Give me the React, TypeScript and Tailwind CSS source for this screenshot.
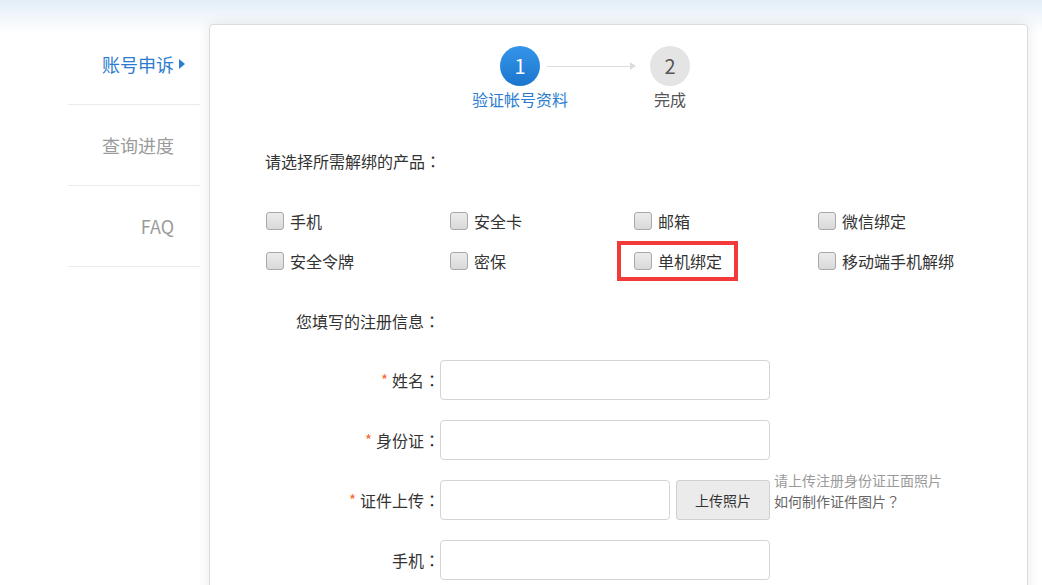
import React from "react";

const font = { fontFamily: '"Noto Sans CJK SC", "Noto Sans", sans-serif' };

function P({ c }: { c: string }) {
  return <span className="font-['Noto_Sans_CJK_TC',sans-serif]">{c}</span>;
}

function Checkbox({ label, highlight }: { label: string; highlight?: boolean }) {
  return (
    <div className="relative flex h-[20px] items-center">
      {highlight && (
        <div className="pointer-events-none absolute left-[-17px] top-[-10px] h-[40px] w-[121px] border-4 border-[#f23a3a]" />
      )}
      <span className="h-[18px] w-[18px] shrink-0 rounded-[3px] border border-[#a9a9a9] bg-gradient-to-b from-[#ececec] to-[#d9d9d9]" />
      <span className="ml-[6px] whitespace-nowrap text-[16px] leading-[20px] text-[#333]">{label}</span>
    </div>
  );
}

function Label({ text, required }: { text: string; required?: boolean }) {
  return (
    <div className="flex w-[230px] shrink-0 items-center justify-end whitespace-nowrap text-[16px] leading-[20px] text-[#333]">
      {required && <span className="mr-[4px] text-[15px] text-[#f5692c]">*</span>}
      <span>
        {text}
        <P c="：" />
      </span>
    </div>
  );
}

export default function App() {
  const products = ["手机", "安全卡", "邮箱", "微信绑定", "安全令牌", "密保", "单机绑定", "移动端手机解绑"];
  return (
    <div
      className="flex min-h-[585px] bg-[linear-gradient(to_bottom,#e3eef8_0px,#f6f9fc_22px,#ffffff_34px)] pl-[68px] pt-[24px] [text-spacing-trim:space-all]"
      style={font}
    >
      <div className="w-[132px] shrink-0">
        <div className="flex h-[81px] items-center justify-end border-b border-[#ebebeb] pr-[26px]">
          <span className="relative text-[18px] leading-[24px] text-[#2b7cd0]">
            账号申诉
            <span className="absolute left-[calc(100%+5px)] top-1/2 -translate-y-1/2 border-y-[5px] border-l-[6px] border-y-transparent border-l-[#2b7cd0]" />
          </span>
        </div>
        <div className="flex h-[81px] items-center justify-end border-b border-[#ebebeb] pr-[26px]">
          <span className="text-[18px] leading-[24px] text-[#9b9b9b]">查询进度</span>
        </div>
        <div className="flex h-[81px] items-center justify-end border-b border-[#ebebeb] pr-[26px]">
          <span className="text-[18px] leading-[24px] text-[#9b9b9b]">FAQ</span>
        </div>
      </div>

      <div className="ml-[9px] h-[620px] w-[819px] shrink-0 rounded-[4px] border border-[#dcdcdc] bg-white pt-[21px] shadow-[0_0_14px_rgba(0,0,0,0.09)]">
        {/* steps */}
        <div className="flex items-start pl-[290px]">
          <div className="flex w-[40px] flex-col items-center">
            <div className="flex h-[40px] w-[40px] items-center justify-center rounded-full bg-gradient-to-b from-[#3595ea] to-[#1a76cc] text-[20px] leading-none text-white">
              1
            </div>
            <span className="mt-[4px] whitespace-nowrap text-[16px] leading-[18px] text-[#2b7cd0]">验证帐号资料</span>
          </div>
          <div className="ml-[7px] mr-[14px] flex h-[40px] w-[89px] items-center">
            <div className="h-px w-[83px] bg-[#dddddd]" />
            <div className="border-y-[4px] border-l-[6px] border-y-transparent border-l-[#dddddd]" />
          </div>
          <div className="flex w-[40px] flex-col items-center">
            <div className="flex h-[40px] w-[40px] items-center justify-center rounded-full bg-[#e4e4e4] text-[20px] leading-none text-[#555]">
              2
            </div>
            <span className="mt-[4px] whitespace-nowrap text-[16px] leading-[18px] text-[#555]">完成</span>
          </div>
        </div>

        <div className="mt-[41px] pl-[55px] text-[16px] leading-[24px] text-[#333]">
          请选择所需解绑的产品<P c="：" />
        </div>

        <div className="mt-[38px] grid grid-cols-[184px_184px_184px_184px] gap-y-[20px] pl-[56px]">
          {products.map((p) => (
            <Checkbox key={p} label={p} highlight={p === "单机绑定"} />
          ))}
        </div>

        <div className="mt-[38px] pl-[86px] text-[16px] leading-[24px] text-[#333]">
          您填写的注册信息<P c="：" />
        </div>

        <div className="mt-[27px] flex flex-col gap-[20px]">
          <div className="flex h-[40px] items-center">
            <Label text="姓名" required />
            <div className="h-[40px] w-[330px] rounded-[4px] border border-[#d4d4d4] bg-white" />
          </div>
          <div className="flex h-[40px] items-center">
            <Label text="身份证" required />
            <div className="h-[40px] w-[330px] rounded-[4px] border border-[#d4d4d4] bg-white" />
          </div>
          <div className="flex h-[40px] items-center">
            <Label text="证件上传" required />
            <div className="h-[40px] w-[230px] rounded-[4px] border border-[#d4d4d4] bg-white" />
            <div className="ml-[6px] flex h-[40px] w-[94px] items-center justify-center rounded-[3px] border border-[#d0d0d0] bg-[#ebebeb] text-[14px] text-[#333]">
              上传照片
            </div>
            <div className="-mt-[10px] ml-[4px] flex flex-col self-start text-[14px] leading-[21px]">
              <span className="text-[#9a9a9a]">请上传注册身份证正面照片</span>
              <span className="text-[#666]">
                如何制作证件图片<P c="？" />
              </span>
            </div>
          </div>
          <div className="flex h-[40px] items-center">
            <Label text="手机" />
            <div className="h-[40px] w-[330px] rounded-[4px] border border-[#d4d4d4] bg-white" />
          </div>
        </div>
      </div>
    </div>
  );
}
